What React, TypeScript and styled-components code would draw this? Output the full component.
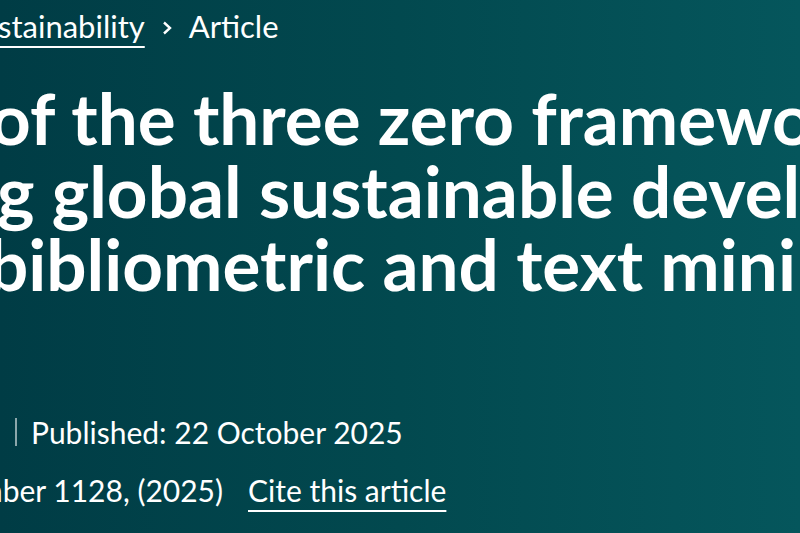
import React from "react";
import styled, { createGlobalStyle } from "styled-components";

const GlobalStyle = createGlobalStyle`
    html, body {
        margin: 0;
        padding: 0;
        background: #003f48;
    }
`;

const Hero = styled.header`
    width: 800px;
    height: 533px;
    overflow: hidden;
    box-sizing: border-box;
    padding-top: 6px;
    background: linear-gradient(90deg, #003c45 0%, #02494f 50%, #05565c 100%);
    color: #ffffff;
    font-family: Lato, "Liberation Sans", sans-serif;
`;

const Row = styled.div<{ $shift?: number }>`
    display: flex;
    align-items: baseline;
    white-space: nowrap;
    margin-left: ${(p) => p.$shift ?? 0}px;
`;

const Crumbs = styled(Row)`
    font-size: 31px;
    line-height: 40px;
    gap: 17px;
`;

const CrumbLink = styled.a`
    color: #ffffff;
    text-decoration: underline;
    text-underline-offset: 8px;
    text-decoration-thickness: 2px;
`;

const Chevron = styled.svg`
    width: 10px;
    height: 14px;
    align-self: center;
    margin-top: 4px;
`;

const Title = styled.h1`
    margin: 35px 0 0;
    font-size: 71px;
    line-height: 73px;
    font-weight: 700;
`;

const TitleLine = styled(Row)``;

const Meta = styled.div`
    margin-top: 112px;
    display: flex;
    flex-direction: column;
    gap: 18px;
    font-size: 30px;
    line-height: 40px;
`;

const Divider = styled.span`
    display: inline-block;
    width: 2px;
    height: 28px;
    background: rgba(255, 255, 255, 0.55);
    margin: 0 14px 0 15px;
    align-self: center;
`;

const CiteLink = styled.a<{ $gap: number }>`
    margin-left: ${(p) => p.$gap}px;
    color: #ffffff;
    text-decoration: underline;
    text-underline-offset: 8px;
    text-decoration-thickness: 2px;
`;

const titleLines = [
    { text: "of the three zero framework", shift: -10 },
    { text: "g global sustainable development", shift: -3 },
    { text: "bibliometric and text mining", shift: -12 },
];

const App = () => {
    return (
        <>
            <GlobalStyle />
            <Hero>
                <Crumbs $shift={-2}>
                    <CrumbLink href="#">stainability</CrumbLink>
                    <Chevron viewBox="0 0 10 14" fill="none">
                        <path d="M2 1.5 L8 7 L2 12.5" stroke="#ffffff" strokeWidth="2.4" />
                    </Chevron>
                    <span>Article</span>
                </Crumbs>
                <Title>
                    {titleLines.map((line) => (
                        <TitleLine key={line.text} $shift={line.shift}>
                            {line.text}
                        </TitleLine>
                    ))}
                </Title>
                <Meta>
                    <Row>
                        <Divider />
                        <span>Published: 22 October 2025</span>
                    </Row>
                    <Row $shift={-22}>
                        <span>mber 1128, (2025)</span>
                        <CiteLink href="#" $gap={25}>
                            Cite this article
                        </CiteLink>
                    </Row>
                </Meta>
            </Hero>
        </>
    );
};

export default App;
